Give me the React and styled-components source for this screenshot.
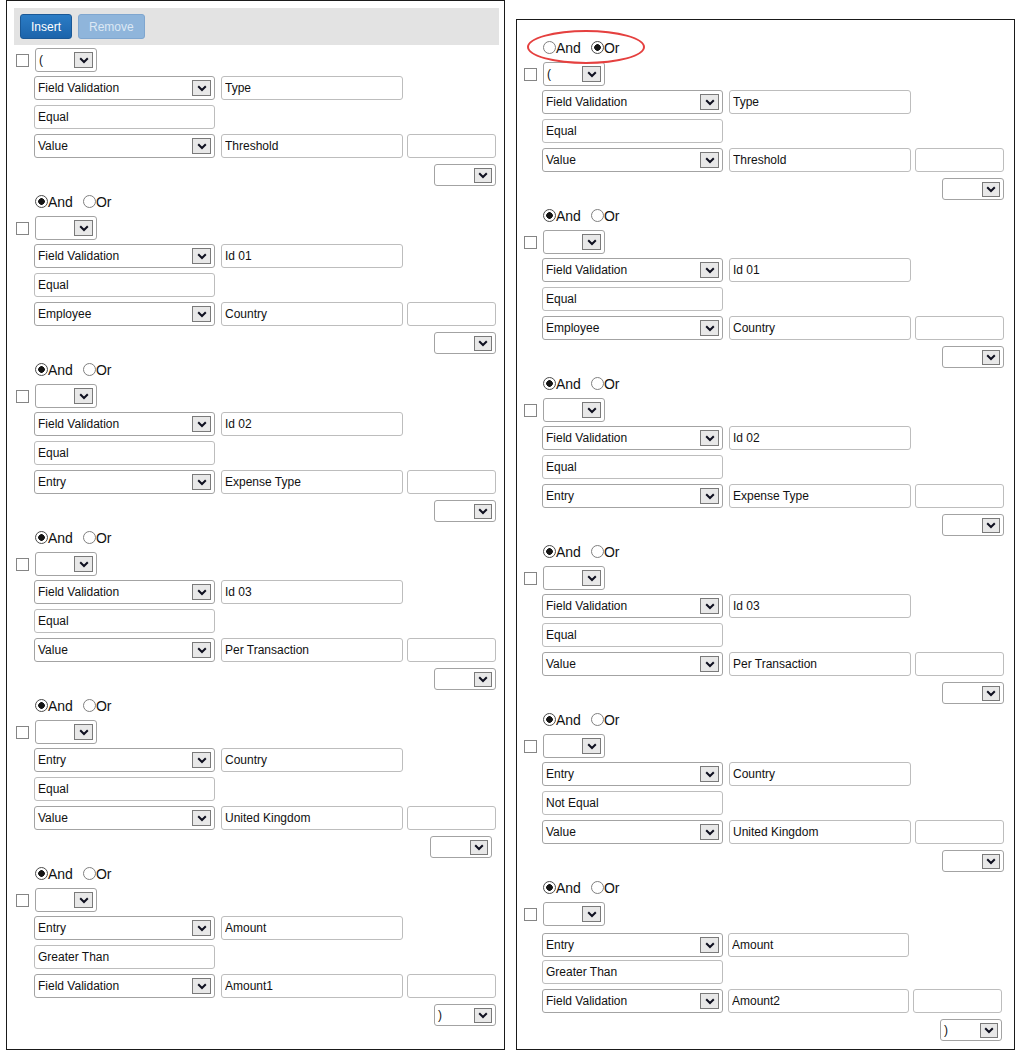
import React from 'react';
import styled, { createGlobalStyle } from 'styled-components';

const GlobalStyle = createGlobalStyle`
  html, body { margin: 0; padding: 0; background: #fff; }
  body {
    font-family: "Liberation Sans", Arial, sans-serif;
    color: #111;
    width: 1018px;
    height: 1054px;
    overflow: hidden;
  }
`;

const Page = styled.div`
  display: flex;
  align-items: flex-start;
  gap: 11px;
  padding-left: 6px;
`;

const Panel = styled.section`
  position: relative;
  box-sizing: border-box;
  width: 499px;
  height: ${(p) => p.$h}px;
  margin-top: ${(p) => p.$top}px;
  padding-top: ${(p) => p.$pt}px;
  border: 1px solid #1a1a1a;
  background: #fff;
`;

const Toolbar = styled.div`
  box-sizing: border-box;
  display: flex;
  align-items: flex-start;
  gap: 6px;
  height: 37px;
  margin: 7px 5px 3px 7px;
  padding: 6px;
  background: #e3e3e3;
`;

const ToolButton = styled.button`
  box-sizing: border-box;
  height: 25px;
  padding: 0 10px;
  border-radius: 3px;
  font: 12px "Liberation Sans", Arial, sans-serif;
  cursor: pointer;
  border: 1px solid ${(p) => (p.$muted ? '#7fa6cf' : '#1a5896')};
  background: ${(p) =>
    p.$muted ? '#8fb5db' : 'linear-gradient(#2b7cc5, #1c64ab)'};
  color: ${(p) => (p.$muted ? '#dce8f4' : '#fff')};
`;

const Block = styled.div`
  padding-left: ${(p) => p.$indent}px;
`;

const CheckRow = styled.div`
  display: flex;
  align-items: center;
  gap: 6px;
  margin-left: -18px;
`;

const Check = styled.input.attrs({ type: 'checkbox' })`
  appearance: none;
  box-sizing: border-box;
  width: 13px;
  height: 13px;
  margin: 0;
  border: 1px solid #858585;
  background: #fff;
`;

const Row = styled.div`
  display: flex;
  align-items: center;
  margin-top: ${(p) => p.$mt}px;
`;

const EndRow = styled.div`
  display: flex;
  justify-content: flex-end;
  width: 462px;
  margin-top: 6px;
  padding-right: ${(p) => p.$shift || 0}px;
  box-sizing: border-box;
`;

const SelectBox = styled.div`
  box-sizing: border-box;
  display: flex;
  align-items: center;
  justify-content: space-between;
  width: ${(p) => p.$w}px;
  height: ${(p) => p.$h}px;
  padding: 0 3px;
  border: 1px solid #a3a3a3;
  border-radius: 3px;
  background: #fff;
  font-size: 12px;
  color: #111;
`;

const SelectText = styled.span`
  white-space: nowrap;
  padding-bottom: 1px;
`;

const ArrowButton = styled.span`
  box-sizing: border-box;
  display: flex;
  align-items: center;
  justify-content: center;
  flex-shrink: 0;
  width: ${(p) => (p.$small ? 18 : 19)}px;
  height: ${(p) => (p.$small ? 15 : 16)}px;
  border: 1px solid #7a7a7a;
  background: #e8e8e8;
`;

const TextField = styled.input.attrs({ type: 'text', readOnly: true })`
  box-sizing: border-box;
  width: ${(p) => p.$w}px;
  height: 24px;
  margin: 0 0 0 ${(p) => p.$gap || 0}px;
  padding: 0 3px;
  border: 1px solid #bdbdbd;
  border-radius: 3px;
  background: #fff;
  font: 12px "Liberation Sans", Arial, sans-serif;
  color: #111;
  outline: none;
`;

const RadioRow = styled.div`
  box-sizing: border-box;
  display: flex;
  align-items: center;
  height: 30px;
  padding: 1px 0 0 ${(p) => p.$indent + 1}px;
`;

const RadioLabel = styled.label`
  display: inline-flex;
  align-items: center;
  font-size: 14px;
  color: #111;
  margin-left: ${(p) => p.$ml || 0}px;
`;

const Radio = styled.input.attrs({ type: 'radio' })`
  appearance: none;
  box-sizing: border-box;
  width: 13px;
  height: 13px;
  margin: 0;
  border-radius: 50%;
  border: 1px solid ${(p) => (p.checked ? '#4a4a4a' : '#808080')};
  background: ${(p) =>
    p.checked
      ? 'radial-gradient(circle, #151515 0 3px, #fff 3.6px)'
      : '#fff'};
`;

const Highlight = styled.span`
  position: absolute;
  left: 10px;
  top: 10px;
  box-sizing: border-box;
  width: 118px;
  height: 34px;
  border: 2.5px solid #e5403f;
  border-radius: 50%;
  pointer-events: none;
`;

const Chevron = () => (
  <svg width="10" height="7" viewBox="0 0 10 7" aria-hidden="true">
    <polyline points="1.2,1.2 5,5 8.8,1.2" fill="none" stroke="#0f1020" strokeWidth="2" />
  </svg>
);

const Select = ({ w, h = 24, small, children }) => (
  <SelectBox $w={w} $h={h} role="combobox">
    <SelectText>{children}</SelectText>
    <ArrowButton $small={small}>
      <Chevron />
    </ArrowButton>
  </SelectBox>
);

const AndOr = ({ indent, or }) => (
  <RadioRow $indent={indent}>
    <RadioLabel>
      <Radio name="x" checked={!or} readOnly />
      And
    </RadioLabel>
    <RadioLabel $ml={10}>
      <Radio name="y" checked={!!or} readOnly />
      Or
    </RadioLabel>
  </RadioRow>
);

const Condition = ({ c, indent }) => {
  const s = c.shift || 0;
  const m = c.fieldMt || 0;
  return (
    <Block $indent={indent}>
      <CheckRow>
        <Check />
        <Select w={62}>{c.paren || ''}</Select>
      </CheckRow>
      <Row $mt={4 + m}>
        <Select w={181}>{c.field}</Select>
        <TextField $w={182 + s} $gap={6 + s} value={c.a} />
      </Row>
      <Row $mt={5 - Math.min(m, 2)}>
        <TextField $w={181} value={c.op} />
      </Row>
      <Row $mt={5}>
        <Select w={181}>{c.vfield}</Select>
        <TextField $w={182 + s} $gap={6 + s} value={c.b} />
        <TextField $w={89} $gap={4} value="" />
      </Row>
      <EndRow $shift={c.endShift}>
        <Select w={62} h={22} small>{c.close || ''}</Select>
      </EndRow>
    </Block>
  );
};

const leftData = [
  { paren: '(', field: 'Field Validation', a: 'Type', op: 'Equal', vfield: 'Value', b: 'Threshold' },
  { field: 'Field Validation', a: 'Id 01', op: 'Equal', vfield: 'Employee', b: 'Country' },
  { field: 'Field Validation', a: 'Id 02', op: 'Equal', vfield: 'Entry', b: 'Expense Type' },
  { field: 'Field Validation', a: 'Id 03', op: 'Equal', vfield: 'Value', b: 'Per Transaction' },
  { field: 'Entry', a: 'Country', op: 'Equal', vfield: 'Value', b: 'United Kingdom', endShift: 4 },
  { field: 'Entry', a: 'Amount', op: 'Greater Than', vfield: 'Field Validation', b: 'Amount1', close: ')' },
];

const rightData = [
  { paren: '(', field: 'Field Validation', a: 'Type', op: 'Equal', vfield: 'Value', b: 'Threshold' },
  { field: 'Field Validation', a: 'Id 01', op: 'Equal', vfield: 'Employee', b: 'Country' },
  { field: 'Field Validation', a: 'Id 02', op: 'Equal', vfield: 'Entry', b: 'Expense Type' },
  { field: 'Field Validation', a: 'Id 03', op: 'Equal', vfield: 'Value', b: 'Per Transaction' },
  { field: 'Entry', a: 'Country', op: 'Not Equal', vfield: 'Value', b: 'United Kingdom' },
  { field: 'Entry', a: 'Amount', op: 'Greater Than', vfield: 'Field Validation', b: 'Amount2', close: ')', shift: -1, endShift: 2, fieldMt: 3 },
];

const ConditionList = ({ data, indent }) =>
  data.map((c, i) => (
    <React.Fragment key={i}>
      <Condition c={c} indent={indent} />
      {i < data.length - 1 && <AndOr indent={indent} />}
    </React.Fragment>
  ));

export default function App() {
  return (
    <>
      <GlobalStyle />
      <Page>
        <Panel $h={1050} $top={0} $pt={0}>
          <Toolbar>
            <ToolButton>Insert</ToolButton>
            <ToolButton $muted>Remove</ToolButton>
          </Toolbar>
          <ConditionList data={leftData} indent={27} />
        </Panel>
        <Panel $h={1031} $top={19} $pt={12}>
          <Highlight />
          <AndOr indent={25} or />
          <ConditionList data={rightData} indent={25} />
        </Panel>
      </Page>
    </>
  );
}
